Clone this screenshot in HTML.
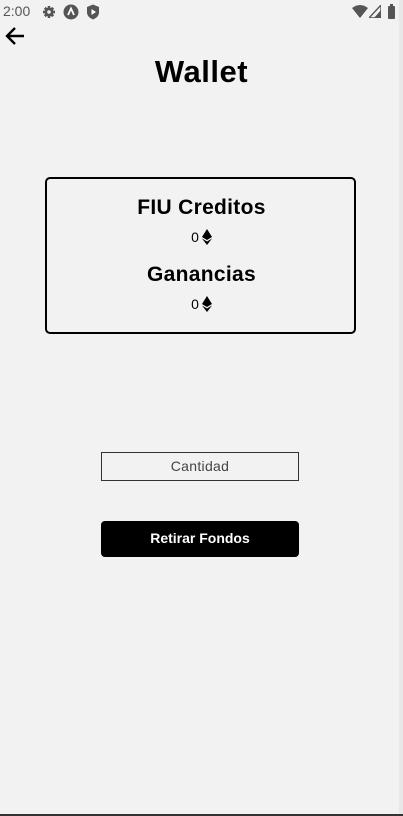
<!DOCTYPE html>
<html><head><style>
body{margin:0;width:403px;height:816px;background:#f2f2f2;font-family:"Liberation Sans",sans-serif;position:relative;overflow:hidden}
.a{position:absolute}
.c{left:0;width:403px;text-align:center}
.e{display:inline-block;vertical-align:-3px;margin-left:3px}
</style></head><body>
<div class="a" style="left:3px;top:3px;font-size:14px;color:#555">2:00</div>
<svg class="a" style="left:42px;top:5px" width="14" height="14" viewBox="0 0 14 14"><circle cx="7" cy="7" r="4.5" fill="#555"/><g stroke="#555" stroke-width="2.6"><line x1="7" y1="1" x2="7" y2="13"/><line x1="1" y1="7" x2="13" y2="7"/><line x1="2.8" y1="2.8" x2="11.2" y2="11.2"/><line x1="11.2" y1="2.8" x2="2.8" y2="11.2"/></g><circle cx="7" cy="7" r="1.8" fill="#f2f2f2"/></svg>
<svg class="a" style="left:63px;top:4px" width="16" height="16"><circle cx="8" cy="8" r="7.5" fill="#555"/><path d="M5 11L8 4.5L11 11" stroke="#fff" stroke-width="1.8" fill="none"/></svg>
<svg class="a" style="left:86px;top:4px" width="14" height="16"><path d="M7 0.5L13 3V8.5Q13 13 7 15.5Q1 13 1 8.5V3Z" fill="#555"/><path d="M5.5 5L10 8L5.5 11Z" fill="#fff"/></svg>
<svg class="a" style="left:352px;top:5px" width="16" height="13"><path d="M0 3Q8 -3 16 3L8 13Z" fill="#555"/></svg>
<svg class="a" style="left:369px;top:5px" width="12" height="13"><path d="M12 0V13H0Z" fill="none" stroke="#555" stroke-width="1.4"/><path d="M12 5V13H5Z" fill="#555"/></svg>
<div class="a" style="left:388px;top:6px;width:7px;height:13px;background:#555;border-radius:1px"></div>
<div class="a" style="left:390px;top:4px;width:3px;height:2px;background:#555"></div>
<svg class="a" style="left:4px;top:26px" width="22" height="20"><path d="M20 10H3M11 2L3 10L11 18" stroke="#000" stroke-width="2.4" fill="none"/></svg>
<div class="a c" style="top:54px;font-size:31px;font-weight:bold;letter-spacing:0.5px">Wallet</div>
<div class="a" style="left:45px;top:177px;width:307px;height:153px;border:2px solid #000;border-radius:5px"></div>
<div class="a c" style="top:196px;font-size:21px;font-weight:bold;letter-spacing:0.3px">FIU Creditos</div>
<div class="a c" style="top:229px;font-size:14px">0<svg class="e" width="10" height="16" viewBox="0 0 10 16"><path d="M5 0L10 8L5 11L0 8Z" fill="#000"/><path d="M0 9.5L5 12.5L10 9.5L5 16Z" fill="#000"/></svg></div>
<div class="a c" style="top:263px;font-size:21px;font-weight:bold;letter-spacing:0.3px">Ganancias</div>
<div class="a c" style="top:296px;font-size:14px">0<svg class="e" width="10" height="16" viewBox="0 0 10 16"><path d="M5 0L10 8L5 11L0 8Z" fill="#000"/><path d="M0 9.5L5 12.5L10 9.5L5 16Z" fill="#000"/></svg></div>
<div class="a" style="left:101px;top:452px;width:196px;height:27px;border:1px solid #333;text-align:center;line-height:26px;font-size:14px;color:#444;letter-spacing:0.3px">Cantidad</div>
<div class="a" style="left:101px;top:521px;width:198px;height:36px;background:#000;border-radius:4px;color:#fff;text-align:center;line-height:35px;font-weight:bold;font-size:14px">Retirar Fondos</div>
<div class="a" style="left:399px;top:0;width:4px;height:816px;background:#e8e8e8"></div>
<div class="a" style="left:0;top:814px;width:403px;height:2px;background:#333"></div>
</body></html>
